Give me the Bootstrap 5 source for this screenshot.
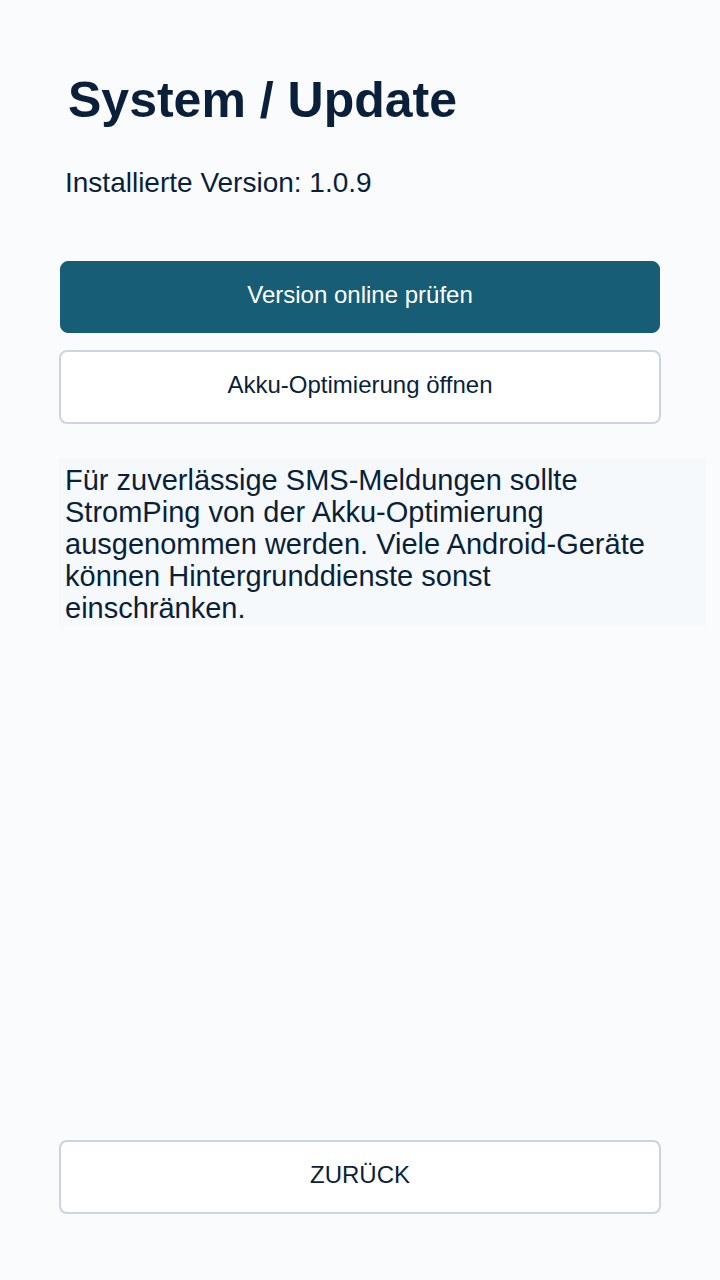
<!DOCTYPE html>
<html lang="de">
<head>
<meta charset="utf-8">
<meta name="viewport" content="width=device-width, initial-scale=1">
<title>System / Update</title>
<link href="https://cdn.jsdelivr.net/npm/bootstrap@5.3.0/dist/css/bootstrap.min.css" rel="stylesheet">
<style>
  body { background: #f9fbfc; color: #0a1f3a; font-family: "Liberation Sans", Arial, sans-serif; }
  .screen { padding: 72px 59px 66px; }
  .screen-title { font-size: 50px; line-height: 56px; margin: 0 0 39px 9px; font-weight: 700; }
  .version { font-size: 28px; line-height: 32px; margin: 0 0 61px 6px; }
  .action { font-size: 24px; line-height: 28px; padding: 19px 12px 23px; border-radius: 8px; border: 2px solid #cbd5e1; background: #fff; color: #0a1f3a; }
  .action:hover { background: #f1f5f9; border-color: #cbd5e1; color: #0a1f3a; }
  .action-main { margin: 1px; border-width: 1px; }
  .action-main, .action-main:hover { background: #165d75; border-color: #165d75; color: #fff; }
  .hint { font-size: 29px; line-height: 32px; padding: 6px 40px 2px 6px; background: #f5f9fc; margin: 34px -45px 0 0; }
</style>
</head>
<body>
<main class="screen d-flex flex-column min-vh-100">
  <h1 class="screen-title">System / Update</h1>
  <p class="version">Installierte Version: 1.0.9</p>
  <div class="d-grid gap-3">
    <button type="button" class="btn action action-main">Version online prüfen</button>
    <button type="button" class="btn action">Akku-Optimierung öffnen</button>
  </div>
  <p class="hint">Für zuverlässige SMS-Meldungen sollte StromPing von der Akku-Optimierung ausgenommen werden. Viele Android-Geräte können Hintergrunddienste sonst einschränken.</p>
  <button type="button" class="btn action w-100 mt-auto">ZURÜCK</button>
</main>
<script src="https://cdn.jsdelivr.net/npm/bootstrap@5.3.0/dist/js/bootstrap.bundle.min.js"></script>
</body>
</html>
